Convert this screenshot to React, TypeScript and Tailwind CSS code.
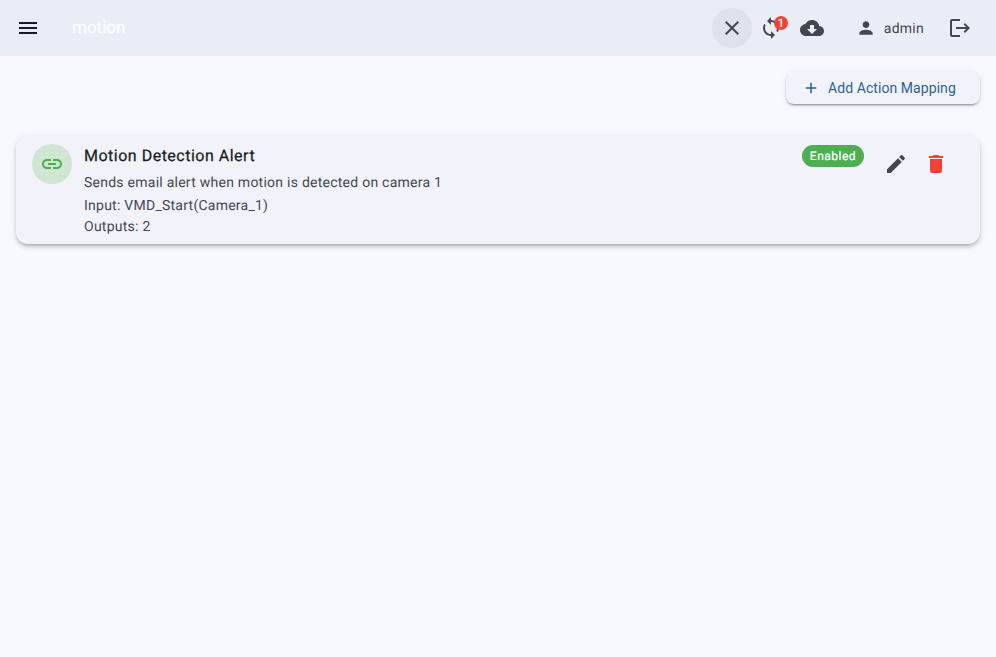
import React from 'react';

const Icon = ({ d, className }: { d: string; className?: string }) => (
  <svg viewBox="0 0 24 24" fill="currentColor" className={className}>
    <path d={d} />
  </svg>
);

const icons = {
  menu: 'M3 18h18v-2H3v2zm0-5h18v-2H3v2zm0-7v2h18V6H3z',
  close: 'M19 6.41 17.59 5 12 10.59 6.41 5 5 6.41 10.59 12 5 17.59 6.41 19 12 13.41 17.59 19 19 17.59 13.41 12z',
  sync: 'M12 4V1L8 5l4 4V6c3.31 0 6 2.69 6 6 0 1.01-.25 1.97-.7 2.8l1.46 1.46C19.54 15.03 20 13.57 20 12c0-4.42-3.58-8-8-8zm0 14c-3.31 0-6-2.69-6-6 0-1.01.25-1.97.7-2.8L5.24 7.74C4.46 8.97 4 10.43 4 12c0 4.42 3.58 8 8 8v3l4-4-4-4v3z',
  cloud: 'M19.35 10.04C18.67 6.59 15.64 4 12 4 9.11 4 6.6 5.64 5.35 8.04 2.34 8.36 0 10.91 0 14c0 3.31 2.69 6 6 6h13c2.76 0 5-2.24 5-5 0-2.64-2.05-4.78-4.65-4.96zM17 13l-5 5-5-5h3V9h4v4h3z',
  person: 'M12 12c2.21 0 4-1.79 4-4s-1.79-4-4-4-4 1.79-4 4 1.79 4 4 4zm0 2c-2.67 0-8 1.34-8 4v2h16v-2c0-2.66-5.33-4-8-4z',
  logout: 'M17 7l-1.41 1.41L18.17 11H8v2h10.17l-2.58 2.58L17 17l5-5zM4 5h8V3H4c-1.1 0-2 .9-2 2v14c0 1.1.9 2 2 2h8v-2H4V5z',
  add: 'M19 13h-6v6h-2v-6H5v-2h6V5h2v6h6v2z',
  link: 'M3.9 12c0-1.71 1.39-3.1 3.1-3.1h4V7H7c-2.76 0-5 2.24-5 5s2.24 5 5 5h4v-1.9H7c-1.71 0-3.1-1.39-3.1-3.1zM8 13h8v-2H8v2zm9-6h-4v1.9h4c1.71 0 3.1 1.39 3.1 3.1s-1.39 3.1-3.1 3.1h-4V17h4c2.76 0 5-2.24 5-5s-2.24-5-5-5z',
  edit: 'M3 17.25V21h3.75L17.81 9.94l-3.75-3.75L3 17.25zM20.71 7.04c.39-.39.39-1.02 0-1.41l-2.34-2.34a.9959.9959 0 0 0-1.41 0l-1.83 1.83 3.75 3.75 1.83-1.83z',
  trash: 'M6 19c0 1.1.9 2 2 2h8c1.1 0 2-.9 2-2V7H6v12zM19 4h-3.5l-1-1h-5l-1 1H5v2h14V4z',
};

function Header() {
  return (
    <header className="flex h-14 items-center bg-[#e9eef6] pl-4 pr-6 text-[#44474e]">
      <Icon d={icons.menu} className="size-6 text-[#191c20]" />
      <div className="ml-8 pt-px text-[17px] text-white [-webkit-text-stroke:0.25px]">motion</div>
      <div className="flex-1" />
      <div className="flex size-10 items-center justify-center rounded-full bg-[#dfe3eb]">
        <Icon d={icons.close} className="size-6" />
      </div>
      <div className="relative ml-[7px] size-6">
        <Icon d={icons.sync} className="size-6" />
        <span className="absolute -right-[5px] top-0 flex size-[14px] items-center justify-center rounded-full bg-[#f44336] text-xs font-medium leading-none text-white">
          1
        </span>
      </div>
      <Icon d={icons.cloud} className="ml-[17px] size-6" />
      <Icon d={icons.person} className="ml-8 size-5" />
      <span className="ml-2 pt-px text-sm tracking-[0.25px]">admin</span>
      <Icon d={icons.logout} className="ml-6 size-6" />
    </header>
  );
}

function MappingCard() {
  return (
    <div className="flex h-[108px] rounded-xl bg-[#f1f2fa] py-2 pl-4 pr-4 shadow-[0_3px_3px_-2px_rgba(0,0,0,0.2),0_3px_4px_0_rgba(0,0,0,0.14),0_1px_8px_0_rgba(0,0,0,0.08)]">
      <div className="flex size-10 shrink-0 items-center justify-center rounded-full bg-[#cfe6d2]">
        <Icon d={icons.link} className="size-6 text-[#4caf50]" />
      </div>
      <div className="ml-3 flex-1 text-sm tracking-[0.25px] text-[#44474e]">
        <h3 className="mt-px text-base leading-[22px] tracking-[0.5px] text-[#191c20] [-webkit-text-stroke:0.25px]">Motion Detection Alert</h3>
        <p className="mt-1.5 leading-5">Sends email alert when motion is detected on camera 1</p>
        <p className="mt-[3px] leading-[21px]">Input: VMD_Start(Camera_1)</p>
        <p className="leading-5">Outputs: 2</p>
      </div>
      <div className="flex items-start">
        <span className="mr-5 mt-[1px] flex h-[22px] w-[62px] items-center justify-center rounded-full bg-[#4caf50] text-xs tracking-[0.5px] text-white [-webkit-text-stroke:0.2px]">
          Enabled
        </span>
        <Icon d={icons.edit} className="mt-2 size-6 text-[#44474e]" />
        <Icon d={icons.trash} className="ml-4 mr-4 mt-2 size-6 text-[#f44336]" />
      </div>
    </div>
  );
}

export default function App() {
  return (
    <div className="min-h-screen bg-[#f8f9ff] font-['Roboto',sans-serif] [text-rendering:geometricPrecision]">
      <Header />
      <main className="px-4 pt-4">
        <div className="flex justify-end">
          <button className="flex h-8 w-[194px] items-center rounded-lg bg-[#f1f2fa] pl-4 text-sm text-[#2f5f95] shadow-[0_3px_1px_-2px_rgba(0,0,0,0.2),0_2px_2px_0_rgba(0,0,0,0.14),0_1px_5px_0_rgba(0,0,0,0.12)]">
            <Icon d={icons.add} className="size-[18px]" />
            <span className="ml-2 tracking-[0.07px]">Add Action Mapping</span>
          </button>
        </div>
        <div className="mt-8">
          <MappingCard />
        </div>
      </main>
    </div>
  );
}
